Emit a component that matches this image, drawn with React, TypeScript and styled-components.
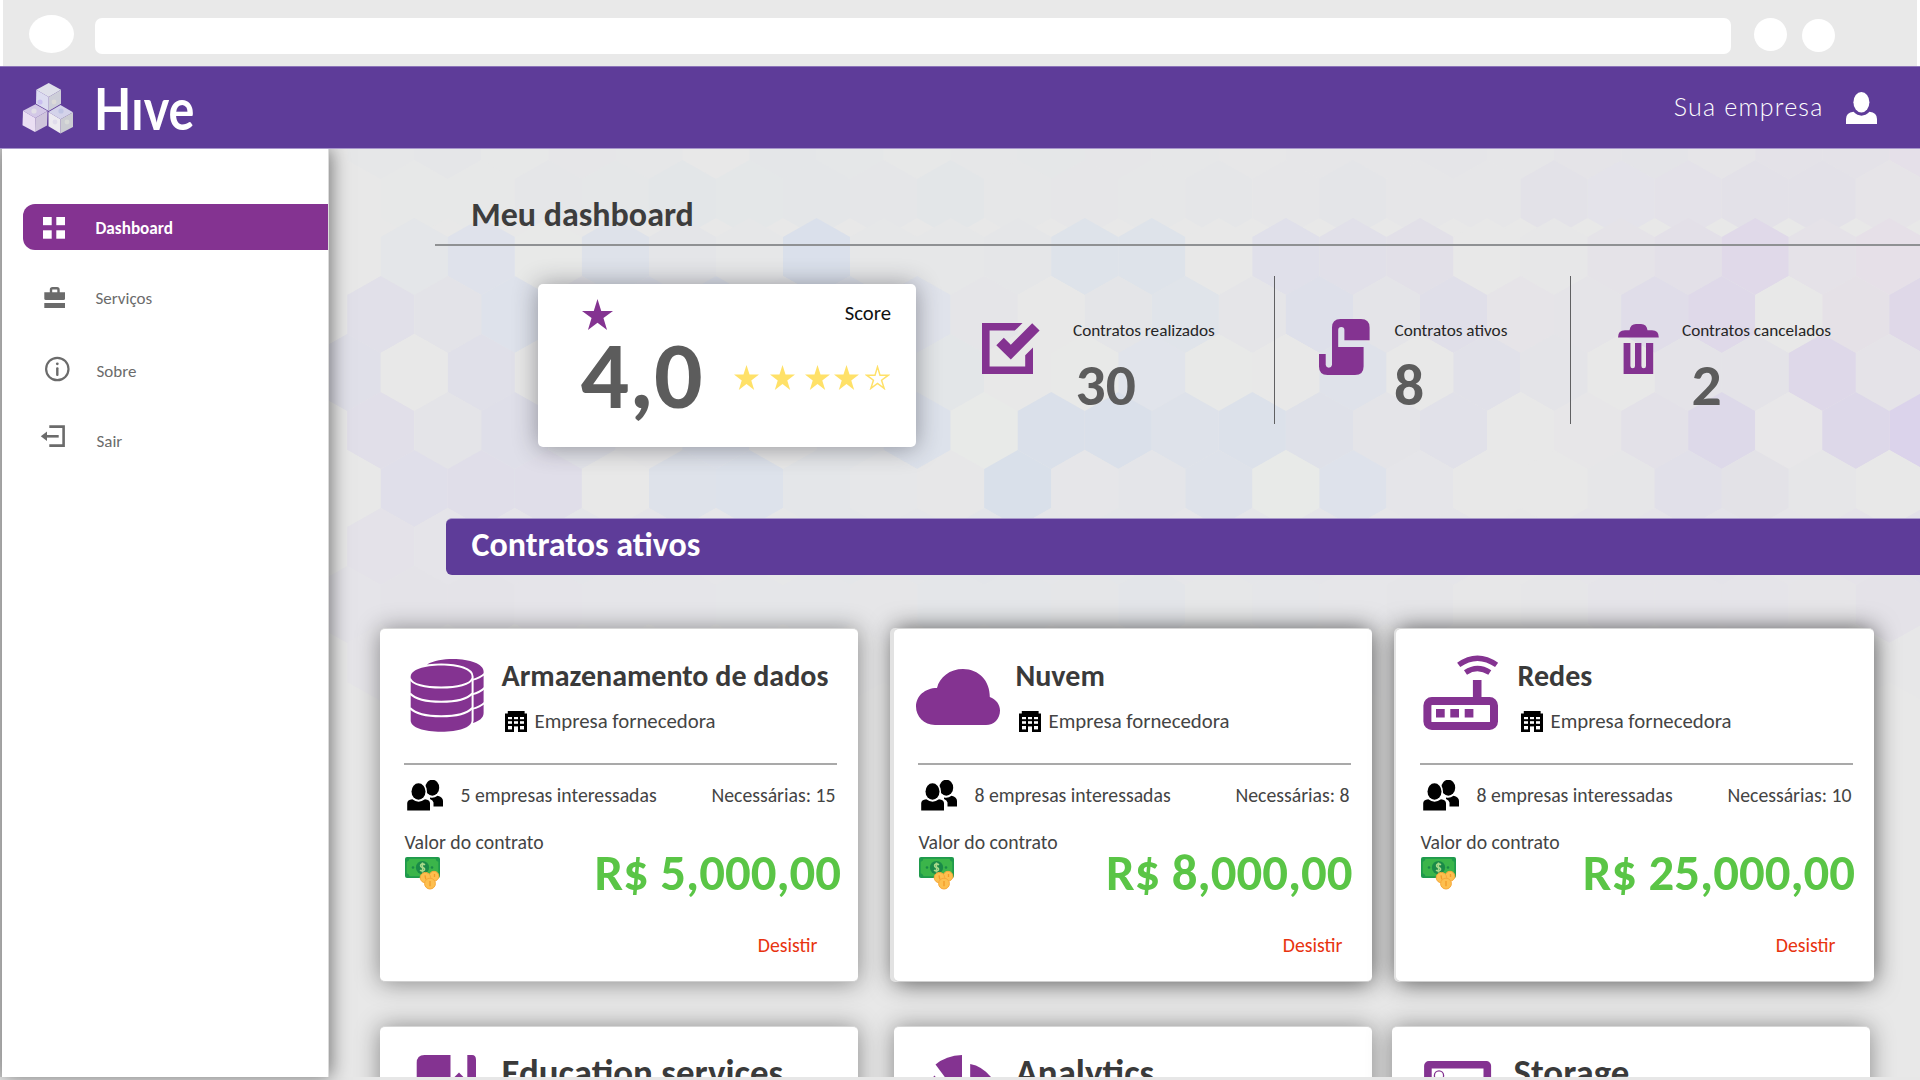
import React from "react";
import styled, { createGlobalStyle } from "styled-components";

const PURPLE = "#5e3c99";
const MAGENTA = "#843391";
const GRAY = "#6b6b6b";

const GlobalStyle = createGlobalStyle`
  * { box-sizing: border-box; }
  html, body { margin: 0; padding: 0; background: #fff; }
  body {
    font-family: Carlito, Calibri, Lato, "Liberation Sans", sans-serif;
    line-height: 1;
    overflow: hidden;
  }
  svg { display: block; flex: none; }
`;

const Page = styled.div`
  width: 1920px;
  height: 1080px;
  display: flex;
  flex-direction: column;
  overflow: hidden;
`;

/* ---------- browser chrome ---------- */

const BrowserBar = styled.div`
  height: 66px;
  margin: 0 3px;
  padding: 15px 0 0 26px;
  display: flex;
  align-items: flex-start;
  background: #e9e9e9;
`;

const BackButton = styled.div`
  width: 45px;
  height: 38px;
  border-radius: 50%;
  background: #fff;
`;

const AddressField = styled.div`
  width: 1636px;
  height: 36px;
  margin: 3px 23px 0 21px;
  border-radius: 7px;
  background: #fff;
`;

const RoundButton = styled.div<{ $drop: number }>`
  width: 33px;
  height: 33px;
  margin: ${(p) => p.$drop}px 15px 0 0;
  border-radius: 50%;
  background: #fff;
`;

/* ---------- header ---------- */

const Header = styled.header`
  position: relative;
  z-index: 3;
  height: 83px;
  padding: 0 42px 0 20px;
  display: flex;
  align-items: flex-start;
  background: ${PURPLE};
  border-top: 1px solid #8c75b8;
  border-bottom: 1px solid #a796cb;
`;

const Brand = styled.div`
  flex: 1;
  display: flex;
  align-items: flex-start;
  padding-top: 12px;
`;

const BrandName = styled.span`
  margin: 0.5px 0 0 18px;
  font-family: Lato, sans-serif;
  font-size: 57px;
  font-weight: 700;
  line-height: 57px;
  color: #fff;
  transform: scaleX(0.85);
  transform-origin: 0 0;
`;

const Dotless = styled.span`
  display: inline-block;
  clip-path: inset(20px 0 0 0);
`;

const Company = styled.span`
  margin: 27px 22.5px 0 0;
  font-family: Lato, sans-serif;
  font-size: 25px;
  font-weight: 300;
  letter-spacing: 1.2px;
  color: #fff;
`;

const UserIcon = styled.svg`
  margin-top: 25px;
`;

/* ---------- body ---------- */

const Body = styled.div`
  height: 928px;
  display: flex;
  border-left: 2px solid #c9c9c9;
`;

const Footer = styled.div`
  height: 3px;
  background: #e7e7e7;
`;

const Sidebar = styled.nav`
  width: 327px;
  flex: none;
  padding: 55px 0 0 21px;
  display: flex;
  flex-direction: column;
  background: #fff;
  box-shadow: 2px 0 18px rgba(0, 0, 0, 0.5);
  border-right: 1px solid #dcdcdc;
  z-index: 2;
`;

const MenuItem = styled.a<{ $active?: boolean; $gap?: number }>`
  height: 46px;
  margin-top: ${(p) => p.$gap ?? 0}px;
  padding-left: 16px;
  display: flex;
  align-items: center;
  border-radius: 12px 0 0 12px;
  background: ${(p) => (p.$active ? MAGENTA : "transparent")};
  color: ${(p) => (p.$active ? "#fff" : GRAY)};
  font-size: ${(p) => (p.$active ? 17.2 : 17)}px;
  font-weight: ${(p) => (p.$active ? 700 : 400)};
`;

const MenuLabel = styled.span<{ $drop: number; $indent?: number }>`
  margin-left: ${(p) => 24.5 + (p.$indent ?? 0)}px;
  padding-top: ${(p) => p.$drop * 2}px;
`;

const Main = styled.main`
  position: relative;
  flex: 1;
  min-width: 0;
  overflow: hidden;
  background: #e8e8e8;
`;

const Backdrop = styled.svg`
  position: absolute;
  left: 0;
  top: 0;
  opacity: 0.88;
`;

const Content = styled.div`
  position: relative;
  display: flex;
  flex-direction: column;
`;

const PageTitle = styled.h1`
  margin: 49px 0 0 106px;
  padding: 0 0 12px 36px;
  font-size: 34px;
  line-height: 34px;
  font-weight: 700;
  color: #3d3d3d;
  border-bottom: 2px solid #8f9193;
`;

const Overview = styled.section`
  height: 272px;
  padding: 30px 0 0 209px;
  display: flex;
  align-items: flex-start;
`;

const ScoreCard = styled.article`
  width: 378px;
  height: 163px;
  margin-top: 8px;
  padding: 14.5px 25px 0 43px;
  background: #fff;
  border-radius: 5px;
  box-shadow: 0 1px 24px rgba(40, 40, 50, 0.45);
`;

const ScoreTop = styled.div`
  height: 29px;
  display: flex;
  justify-content: space-between;
`;

const ScoreLabel = styled.span`
  padding-top: 4.5px;
  font-size: 20.7px;
  color: #111;
`;

const ScoreBottom = styled.div`
  display: flex;
  justify-content: space-between;
  align-items: flex-start;
`;

const ScoreValue = styled.strong`
  font-size: 96px;
  line-height: 96px;
  font-weight: 700;
  margin-left: -0.5px;
  color: #5c5c5c;
`;

const Rating = styled.div`
  display: flex;
  padding-top: 37.5px;
  margin-right: 1px;
`;

const StarIcon = styled.svg<{ $gap?: number }>`
  margin-left: ${(p) => p.$gap ?? 0}px;
`;

const Stat = styled.div<{ $width: number; $pad: number; $last?: boolean }>`
  width: ${(p) => p.$width}px;
  height: 148px;
  padding-left: ${(p) => p.$pad}px;
  display: flex;
  align-items: flex-start;
  border-right: ${(p) => (p.$last ? "none" : "1px solid #606062")};
`;

const StatIcon = styled.div`
  padding-top: 43px;
`;

const StatText = styled.div`
  display: flex;
  flex-direction: column;
  padding: 46px 0 0 1px;
  white-space: nowrap;
`;

const StatLabel = styled.span`
  font-size: 17.2px;
  line-height: 17px;
  color: #262626;
`;

const StatValue = styled.strong<{ $indent: number }>`
  margin: 16px 0 0 ${(p) => p.$indent}px;
  font-size: 59.5px;
  line-height: 60px;
  color: #5c5c5c;
`;

const SectionBar = styled.h2`
  height: 57px;
  margin: 0 0 0 117px;
  padding: 9px 0 0 25.5px;
  font-size: 34px;
  line-height: 34px;
  color: #fff;
  background: ${PURPLE};
  border-top: 1px solid #a99acb;
  border-radius: 6px 0 0 6px;
`;

const CardGrid = styled.div<{ $columns: string; $top: number }>`
  margin: ${(p) => p.$top}px 0 0 51px;
  display: grid;
  grid-template-columns: ${(p) => p.$columns};
  column-gap: 0;
`;

const Card = styled.article<{ $ghost?: number }>`
  width: 478px;
  height: 354px;
  padding: 0 21px 0 24px;
  display: flex;
  flex-direction: column;
  background: #fff;
  border-radius: 5px;
  border-top: 1px solid #d6d6d6;
  border-bottom: 1px solid #cfcfcf;
  box-shadow: ${(p) =>
    p.$ghost
      ? `-${p.$ghost}px 0 0 #e2e2e2, 0 1px 24px rgba(0,0,0,0.65)`
      : "0 1px 24px rgba(0,0,0,0.42)"};
`;

const CardHead = styled.div`
  height: 134px;
  display: flex;
`;

const IconSlot = styled.div<{ $top: number }>`
  width: 97px;
  padding-top: ${(p) => p.$top}px;
`;

const CardHeadText = styled.div<{ $top: number }>`
  padding: ${(p) => p.$top}px 0 0 0.5px;
  white-space: nowrap;
`;

const CardTitle = styled.h3<{ $size?: number }>`
  margin: 0;
  font-size: ${(p) => p.$size ?? 30}px;
  line-height: 30px;
  color: #3a3a3a;
`;

const Supplier = styled.div`
  margin: 20px 0 0 3.5px;
  display: flex;
  align-items: center;
  font-size: 20.8px;
  color: #444;

  span { margin-left: 7.5px; }
`;

const Divider = styled.hr`
  width: 433px;
  height: 2px;
  margin: 0;
  border: 0;
  background: #a9a9a9;
`;

const Interest = styled.div`
  height: 50px;
  display: flex;
  align-items: center;
  justify-content: space-between;
  padding: 12px 1.5px 0 2px;
  font-size: 19.75px;
  color: #444;
`;

const Interested = styled.div`
  display: flex;
  align-items: center;

  span { margin: -1px 0 0 16.5px; }
`;

const NeededCount = styled.span`
  margin-top: -1px;
`;

const Contract = styled.div`
  height: 100px;
  display: flex;
  justify-content: space-between;
  padding-top: 18px;
`;

const ContractLabel = styled.div`
  display: flex;
  flex-direction: column;
  gap: 4px;
  padding-left: 0.5px;
  font-size: 19.75px;
  color: #444;
`;

const Price = styled.strong<{ $shift: number }>`
  margin: 15px ${(p) => p.$shift}px 0 0;
  font-size: 50.8px;
  line-height: 50px;
  color: #5ac546;
`;

const Withdraw = styled.a<{ $end: number }>`
  align-self: flex-end;
  margin: 21px ${(p) => p.$end}px 0 0;
  font-size: 19.75px;
  color: #e8330f;
`;

/* ---------- background pattern ---------- */

const HEX_W = 67.05;
const ROWS: { y: number; x: number; fills: string[] }[] = [
  { y: 102, x: 347.2, fills: ["e6e7e9","e5e6e9","e7e8e8","e6e6e9","e6e7e9","e8e8e8","e4e6e9","e5e7e9","e7e8e8","e6e7e9","e5e7e9","e6e6e9","e6e7e9","e7e7e9","e6e6e9","e6e6e9","e5e5e9","e6e6e9","e5e4e8","e4e4e8","e6e5e9","e4e2e8","e4e2e8","e5e0ea"] },
  { y: 160, x: 380.7, fills: ["e7e8e8","e7e8e9","e5e6e9","e5e7e9","e3e6e9","e4e7e9","e4e6e9","e5e6e9","e3e6e9","e6e7e8","e6e6e9","e6e7e9","e5e6e9","e6e6e9","e4e5e9","e6e6e9","e6e6e9","e3e2e8","e4e3eb","e4e2ea","e3e1e8","e3e1e8","e6e4e8"] },
  { y: 218, x: 313.7, fills: ["e9e9e8","e4e6ea","dee2ec","e8eae9","dde2eb","e4e5e8","e6e7e9","d9e0ec","e6e7e8","e6e7e8","e5e6e9","dde3eb","dde3eb","e8e9e9","dfdfeb","e1e0ea","e2e0e9","e8e8e8","e7e7e9","e5e3e8","e3dfe9","dfd8ea","e5e2e8","e6e0e9"] },
  { y: 276, x: 347.2, fills: ["e1e0ea","e3e3e8","dde2ec","e3e3e8","dee2ec","dde2ec","e5e6e9","dee3ec","dfe3ec","e5e5e9","e9e9e8","e4e5e8","dfe4eb","e5e5e9","dddfeb","e4e4e8","e0deea","e6e4e8","e5e4e8","dfdcea","ded8ea","e9e9e8","e5e1e7","ded6e9"] },
  { y: 334, x: 313.7, fills: ["dfdfea","e9e9e8","dfdfea","e8e9e9","e5e5e9","e5e5e9","e5e5e9","e8eae9","e1e4e9","e3e6e9","e9e9e9","e9eae8","e1e4ec","e8eae9","e9e9e8","dee2eb","e8e8e8","e1e1ea","e4e4e9","e9e9e8","e4e3e9","e4e3e9","ddd6ea","e5e3e8"] },
  { y: 392, x: 347.2, fills: ["e1deea","e4e4e8","dedeea","e2e3ea","e7e7e9","dde2ec","e9e9e8","e4e6ea","dce2ec","e9ebe9","d9e0eb","d9e0eb","dde2eb","dbe1eb","dee1ea","e4e4e9","e1e1ea","e9e9e8","e7e6e9","e3e1e9","dcd8ea","e8e7ea","dcd6ea","dad1ec"] },
  { y: 450, x: 313.7, fills: ["e8e9e9","e0deeb","dfddea","dfddea","e8e9e9","dde2eb","dce2ec","e4e6ea","e6e7ea","e7e7e9","d8e0eb","e6e6ea","e4e5ea","dde2eb","e8ebe9","dde2ec","e5e5ea","e9e9e8","e8e8e8","e6e6e8","e1dfea","e3e2e7","e6e6e8","e9e9e8"] },
  { y: 508, x: 347.2, fills: ["e4e2ea","e5e4ea","e5e4ea","e4e5ea","e5e5ea","e6e6ea","e6e7e9","e4e6ea","e5e6ea","e3e5ea","e5e6ea","e4e6ea","e6e6ea","e5e6ea","e5e5ea","e6e6ea","e5e5ea","e7e7e9","e6e5ea","e5e4ea","e4e3ea","e6e5ea","e5e3ea","e3e1ea"] },
  { y: 566, x: 313.7, fills: ["e5e4ea","e4e3e9","e4e3e9","e5e4ea","e5e5ea","e5e5ea","e5e6ea","e5e6ea","e6e6e9","e4e6ea","e4e6ea","e5e6e9","e3e5ea","e6e7e9","e5e6ea","e6e6ea","e5e5e9","e7e7e9","e6e6e9","e5e4ea","e5e4ea","e5e4ea","e6e5e9","e4e2e9"] },
  { y: 624, x: 347.2, fills: ["e6e5ea","e6e6e9","e7e7e9","e6e6e9","e7e7e9","e7e7e9","e7e7e9","e7e7e9","e7e7e9","e6e7e9","e7e7e9","e6e7e9","e7e7e9","e7e7e9","e7e7e9","e7e7e9","e7e7e9","e7e7e9","e7e7e9","e6e6e9","e6e5e9","e6e5ea","e7e7e9","e7e7e9"] },
];

function HexPattern() {
  return (
    <Backdrop width="1591" height="928" viewBox="329 149 1591 928">
      {ROWS.map((row) =>
        row.fills.map((fill, i) => {
          const x = row.x + i * HEX_W;
          const r = x + HEX_W;
          const c = x + HEX_W / 2;
          return (
            <polygon
              key={`${row.y}-${i}`}
              fill={`#${fill}`}
              points={`${c},${row.y} ${r},${row.y + 19} ${r},${row.y + 58} ${c},${row.y + 77} ${x},${row.y + 58} ${x},${row.y + 19}`}
            />
          );
        })
      )}
    </Backdrop>
  );
}

/* ---------- icons ---------- */

const STAR = "M12 0 L14.9 9.2 H24 L16.6 14.8 L19.4 24 L12 18.3 L4.6 24 L7.4 14.8 L0 9.2 H9.1 Z";

function Star({ size = 25, color = "#ffe168", outline = false, gap = 0 }: { size?: number; color?: string; outline?: boolean; gap?: number }) {
  return (
    <StarIcon $gap={gap} width={size} height={size} viewBox="0 0 24 24">
      {outline ? (
        <path d="M12 1.8 L14.4 9.8 H22.4 L15.9 14.6 L18.4 22.5 L12 17.6 L5.6 22.5 L8.1 14.6 L1.6 9.8 H9.6 Z" fill="none" stroke={color} strokeWidth="1.4" />
      ) : (
        <path d={STAR} fill={color} />
      )}
    </StarIcon>
  );
}

function HiveLogo() {
  return (
    <svg width="56" height="56" viewBox="20 79 56 56">
      <polygon points="48.7,83 61,89.8 48.7,97 36.3,89.8" fill="#dfe0ea" />
      <polygon points="36.3,89.8 48.7,97 48.7,111 36,103.7" fill="#dcdcf0" />
      <polygon points="61,89.8 48.7,97 48.7,111 61,103.7" fill="#cdced8" />
      <polygon points="35.5,104.3 47.5,111 35.3,118 23,110.8" fill="#d3c8e6" />
      <polygon points="23,110.8 35.3,118 35,132 22.5,125.2" fill="#eadff3" />
      <polygon points="47.5,111 35.3,118 35,132 47,125.5" fill="#cfc5dc" />
      <polygon points="60.5,105 73,112.2 60.5,119.2 48.5,112" fill="#d4d3ea" />
      <polygon points="48.5,112 60.5,119.2 60.5,133.4 48.5,126.2" fill="#eceaf0" />
      <polygon points="73,112.2 60.5,119.2 60.5,133.4 73,127" fill="#cbccd2" />
      <circle cx="40" cy="102" r="2.6" fill="#c9bff0" />
      <circle cx="54" cy="102" r="2.4" fill="#dcdad8" />
      <circle cx="34" cy="111" r="2.6" fill="#e2dfe6" />
      <circle cx="61" cy="111" r="2.6" fill="#bfc4e4" />
      <circle cx="67" cy="122" r="2.4" fill="#d8dad8" />
      <circle cx="55" cy="122" r="2.4" fill="#e0dcec" />
    </svg>
  );
}

const GridIcon = () => (
  <svg width="32" height="32" viewBox="39 211 32 32" fill="#fff">
    <rect x="43" y="217" width="8.7" height="8.2" />
    <rect x="56.3" y="217" width="8.7" height="8.2" />
    <rect x="43" y="230.3" width="8.7" height="8.4" />
    <rect x="56.3" y="230.3" width="8.7" height="8.4" />
  </svg>
);

const BriefcaseIcon = () => (
  <svg width="32" height="32" viewBox="39 282 32 32" fill={GRAY}>
    <path d="M51 293 V289.8 Q51 288.3 52.5 288.3 H57 Q58.5 288.3 58.5 289.8 V293" fill="none" stroke={GRAY} strokeWidth="2.4" />
    <path d="M44.3 292.3 H65 V298.5 Q65 300 63.5 300 H45.8 Q44.3 300 44.3 298.5 Z" />
    <rect x="44.3" y="303" width="20.7" height="5" />
  </svg>
);

const InfoIcon = () => (
  <svg width="32" height="32" viewBox="39 353 32 32">
    <circle cx="57.3" cy="369" r="11.2" fill="none" stroke={GRAY} strokeWidth="2.2" />
    <circle cx="57.3" cy="363.8" r="1.4" fill={GRAY} />
    <rect x="56.1" y="367.3" width="2.4" height="8.6" rx="1" fill={GRAY} />
  </svg>
);

const ExitIcon = () => (
  <svg width="32" height="32" viewBox="39 420 32 32">
    <path d="M49.3 426.6 H63.6 V445.6 H49.3" fill="none" stroke={GRAY} strokeWidth="2.6" />
    <path d="M58.7 436.3 H46" fill="none" stroke={GRAY} strokeWidth="2.6" />
    <path d="M40.8 436.3 L47 431.6 V441 Z" fill={GRAY} />
  </svg>
);

const CheckIcon = () => (
  <svg width="90" height="60" viewBox="982 319 90 60" fill={MAGENTA}>
    <path d="M982 323 H1022.5 L1014.8 330.6 H989.6 V366.4 H1025.2 V355.2 L1033 347.4 V374 H982 Z" />
    <path d="M996.3 345.3 L1003.8 337.8 L1010.8 344.8 L1032.2 323.2 L1039.6 330.6 L1010.8 359.6 Z" />
  </svg>
);

const ScrollIcon = () => (
  <svg width="74.5" height="60" viewBox="1319 319 74.5 60" fill={MAGENTA}>
    <path d="M1332 327.5 Q1332 319 1340.5 319 H1361 Q1369.6 319 1369.6 327.5 V340.3 H1344.4 V330 A3.1 3.1 0 0 0 1338.2 330 V347 H1363.6 V366.5 Q1363.6 375 1355 375 H1327.5 Q1319 375 1319 366.5 V354 H1325.7 V365 A3.2 3.2 0 0 0 1332 365 Z" />
  </svg>
);

const TrashIcon = () => (
  <svg width="63" height="60" viewBox="1618 319 63 60" fill={MAGENTA}>
    <path d="M1618 337.5 Q1618 330.3 1625 330.3 H1629.5 Q1630.5 324 1636 324 H1641 Q1646.6 324 1647.5 330.3 H1652 Q1658.8 330.3 1658.8 337.5 Z" />
    <path d="M1623.6 343 H1630.4 V366 A2.3 2.3 0 0 0 1635 366 V343 H1641.4 V366 A2.3 2.3 0 0 0 1646 366 V343 H1653.2 V374 H1623.6 Z" />
  </svg>
);

const DatabaseIcon = () => (
  <svg width="97" height="90" viewBox="404 650 97 90">
    <path d="M427 664.5 C434 660.5 443 659 453 659 C470 659 483.6 664 483.6 671.5 V713 C483.6 718 479 721 473 723 V680 Z" fill={MAGENTA} />
    <path d="M472 680 Q480 678 485 673.5 M472 694.5 Q480 692.5 485 687.5 M472 709 Q480 707 485 702.5" fill="none" stroke="#fff" strokeWidth="1.8" />
    <path d="M410.7 676.5 C410.7 669.5 424 665.4 441.2 665.4 C458.4 665.4 471.6 669.5 471.6 676.5 V720.5 C471.6 727.5 458.4 731.8 441.2 731.8 C424 731.8 410.7 727.5 410.7 720.5 Z" fill={MAGENTA} stroke="#fff" strokeWidth="4" paintOrder="stroke" />
    <path d="M410 678.5 C412 684.5 425 687.6 441.2 687.6 C457 687.6 470.5 684.5 472.3 678.5 M410 693.5 C415 698.8 427 701.8 441.2 701.8 C455.5 701.8 467.5 698.8 472.3 693.5 M410 708 C415 713.3 427 716.3 441.2 716.3 C455.5 716.3 467.5 713.3 472.3 708" fill="none" stroke="#fff" strokeWidth="2" />
  </svg>
);

const CloudIcon = () => (
  <svg width="97" height="90" viewBox="918 650 97 90" overflow="visible">
    <path d="M935 725 C924 725 916 716.5 916 706.5 C916 696 925 688 937 688 C939.5 677 950 669 963 669 C979 669 990 681 989.8 697 C996 699.2 1000 704.5 1000 710.5 C1000 719 994 725 986 725 Z" fill={MAGENTA} />
  </svg>
);

const RouterIcon = () => (
  <svg width="97" height="90" viewBox="1420 650 97 90" fill="none" stroke={MAGENTA}>
    <rect x="1427.4" y="701" width="66.6" height="25" rx="4.5" strokeWidth="8" />
    <path d="M1477.2 680 V698" strokeWidth="8.6" />
    <path d="M1465.5 672.5 Q1477.3 664.5 1489.8 672.5" strokeWidth="5.4" />
    <path d="M1458.7 664.9 Q1477.3 651.5 1496.6 664.9" strokeWidth="5.4" />
    <g fill={MAGENTA} stroke="none">
      <rect x="1436" y="709" width="8.7" height="8.5" />
      <rect x="1450.3" y="709" width="8.7" height="8.5" />
      <rect x="1464.7" y="709" width="8.7" height="8.5" />
    </g>
  </svg>
);

const BookIcon = () => (
  <svg width="97" height="60" viewBox="404 1048 97 60" fill={MAGENTA}>
    <path d="M416.7 1110 V1063 Q416.7 1055 424.5 1055 H450.5 V1110 Z" />
    <path d="M467.3 1055 H472 Q476 1055 476 1060 V1110 H467.3 Z" />
    <path d="M459 1072.5 L467.3 1081 V1110 H450.5 V1081 Z" />
  </svg>
);

const PieIcon = () => (
  <svg width="97" height="60" viewBox="918 1048 97 60" fill={MAGENTA}>
    <path d="M962 1055 V1100 L935.5 1064.6 Q946 1055.5 962 1055 Z" />
    <path d="M970.2 1064 Q984 1066.5 994 1081 L970.2 1100 Z" />
    <path d="M934.5 1075.5 L950 1096 H926 Q927 1084 934.5 1075.5 Z" />
  </svg>
);

const StorageIcon = () => (
  <svg width="97" height="60" viewBox="1416 1048 97 60" fill="none" stroke={MAGENTA}>
    <rect x="1427.9" y="1064.8" width="59.4" height="60" rx="1" strokeWidth="7.6" />
    <circle cx="1439" cy="1075.5" r="4.6" strokeWidth="1.3" />
  </svg>
);

const BuildingIcon = () => (
  <svg width="22" height="21" viewBox="0 0 22 21">
    <path d="M2.8 0 H19.6 V2.6 H22 V21 H0 V2.6 H2.8 Z" fill="#000" />
    <g fill="#fff">
      <rect x="3" y="6" width="4" height="2.2" />
      <rect x="9" y="6" width="4" height="2.2" />
      <rect x="15" y="6" width="4" height="2.2" />
      <rect x="3" y="10.2" width="4" height="2.6" />
      <rect x="9" y="10.2" width="4" height="2.6" />
      <rect x="15" y="10.2" width="4" height="2.6" />
      <rect x="3" y="15" width="4" height="3.4" />
      <rect x="15" y="15" width="4" height="3.4" />
      <rect x="9" y="15.4" width="4" height="5.6" />
    </g>
  </svg>
);

const PeopleIcon = () => (
  <svg width="38" height="32" viewBox="406 779.5 38 32">
    <ellipse cx="432.3" cy="787.2" rx="6.9" ry="8" />
    <path d="M430 797 Q434 798 437.5 795.3 Q443 796.5 443 800.5 V806 H433.5 V802 Q433 799.5 430 798.5 Z" />
    <ellipse cx="418.5" cy="791" rx="7" ry="8.2" stroke="#fff" strokeWidth="3" paintOrder="stroke" />
    <path d="M407.2 810 V802.8 Q407.2 799.4 412.3 798.8 Q418.5 803.5 425 798.8 Q430 799.4 430 802.8 V810 Z" />
  </svg>
);

const MoneyIcon = () => (
  <svg width="36" height="33" viewBox="0 0 36 33">
    <rect x="0" y="0" width="35" height="21" rx="2" fill="#1f9a4c" />
    <path d="M4.5 1.8 H30.5 Q31 4.3 33.3 4.8 V16.2 Q31 16.7 30.5 19.2 H4.5 Q4 16.7 1.7 16.2 V4.8 Q4 4.3 4.5 1.8 Z" fill="#3bb54a" />
    <circle cx="17.5" cy="10.5" r="6.6" fill="#1a8a48" />
    <path d="M20 7.8 Q17.5 6 15.7 7.8 Q15 10 17.5 10.5 Q20.3 11.2 19.4 13 Q17.5 15 15 13.2 M17.5 5.4 V15.6" fill="none" stroke="#a9d98a" strokeWidth="1.5" />
    <circle cx="8" cy="10.5" r="1.3" fill="#1a8a48" />
    <circle cx="27" cy="10.5" r="1.3" fill="#1a8a48" />
    <g stroke="#f7a83a" strokeWidth="1" fill="#fdbf4f">
      <circle cx="29" cy="19.2" r="4.9" />
      <circle cx="20.4" cy="20.6" r="5.2" />
      <circle cx="25" cy="26.6" r="5.4" />
    </g>
    <path d="M25 24 V29.2 M20 18.4 L20.8 22.4 M29.5 17 V20" stroke="#f39a28" strokeWidth="1.3" />
  </svg>
);

/* ---------- data ---------- */

const contracts = [
  { title: "Armazenamento de dados", icon: <DatabaseIcon />, interested: 5, needed: 15, price: "R$ 5,000,00", shift: -4, end: 19.5, ghost: 0 },
  { title: "Nuvem", icon: <CloudIcon />, interested: 8, needed: 8, price: "R$ 8,000,00", shift: -1.5, end: 8.5, ghost: 4 },
  { title: "Redes", icon: <RouterIcon />, interested: 8, needed: 10, price: "R$ 25,000,00", shift: -2, end: 17.5, ghost: 2 },
];

const services = [
  { title: "Education services", icon: <BookIcon /> },
  { title: "Analytics", icon: <PieIcon /> },
  { title: "Storage", icon: <StorageIcon /> },
];

export default function App() {
  return (
    <Page>
      <GlobalStyle />
      <BrowserBar>
        <BackButton />
        <AddressField />
        <RoundButton $drop={3} />
        <RoundButton $drop={4} />
      </BrowserBar>

      <Header>
        <Brand>
          <HiveLogo />
          <BrandName>
            H<Dotless>i</Dotless>ve
          </BrandName>
        </Brand>
        <Company>Sua empresa</Company>
        <UserIcon width="32" height="32" viewBox="1846 92 32 32" fill="#fff">
          <ellipse cx="1861.4" cy="102.3" rx="8" ry="10.2" />
          <path d="M1846 124 V119 Q1846 112.8 1853.5 111.8 Q1861.5 119.5 1869.5 111.8 Q1877 112.8 1877 119 V124 Z" />
        </UserIcon>
      </Header>

      <Body>
        <Sidebar>
          <MenuItem $active>
            <GridIcon />
            <MenuLabel $drop={1.7}>Dashboard</MenuLabel>
          </MenuItem>
          <MenuItem $gap={24.5}>
            <BriefcaseIcon />
            <MenuLabel $drop={0.7}>Serviços</MenuLabel>
          </MenuItem>
          <MenuItem $gap={25.5}>
            <InfoIcon />
            <MenuLabel $drop={2.5} $indent={1}>Sobre</MenuLabel>
          </MenuItem>
          <MenuItem $gap={21}>
            <ExitIcon />
            <MenuLabel $drop={5} $indent={1}>Sair</MenuLabel>
          </MenuItem>
        </Sidebar>

        <Main>
          <HexPattern />
          <Content>
            <PageTitle>Meu dashboard</PageTitle>
            <Overview>
              <ScoreCard>
                <ScoreTop>
                  <Star size={31} color={MAGENTA} gap={1} />
                  <ScoreLabel>Score</ScoreLabel>
                </ScoreTop>
                <ScoreBottom>
                  <ScoreValue>4,0</ScoreValue>
                  <Rating>
                    <Star />
                    <Star gap={10.5} />
                    <Star gap={10} />
                    <Star gap={4} />
                    <Star gap={6.5} outline />
                  </Rating>
                </ScoreBottom>
              </ScoreCard>
              <Stat $width={359} $pad={66}>
                <StatIcon><CheckIcon /></StatIcon>
                <StatText>
                  <StatLabel>Contratos realizados</StatLabel>
                  <StatValue $indent={2.5}>30</StatValue>
                </StatText>
              </Stat>
              <Stat $width={296} $pad={44}>
                <StatIcon><ScrollIcon /></StatIcon>
                <StatText>
                  <StatLabel>Contratos ativos</StatLabel>
                  <StatValue $indent={-0.5}>8</StatValue>
                </StatText>
              </Stat>
              <Stat $width={340} $pad={47} $last>
                <StatIcon><TrashIcon /></StatIcon>
                <StatText>
                  <StatLabel>Contratos cancelados</StatLabel>
                  <StatValue $indent={9.5}>2</StatValue>
                </StatText>
              </Stat>
            </Overview>

            <SectionBar>Contratos ativos</SectionBar>

            <CardGrid $columns="514px 502px 478px" $top={53}>
              {contracts.map((c) => (
                <Card key={c.title} $ghost={c.ghost}>
                  <CardHead>
                    <IconSlot $top={21}>{c.icon}</IconSlot>
                    <CardHeadText $top={31.5}>
                      <CardTitle>{c.title}</CardTitle>
                      <Supplier>
                        <BuildingIcon />
                        <span>Empresa fornecedora</span>
                      </Supplier>
                    </CardHeadText>
                  </CardHead>
                  <Divider />
                  <Interest>
                    <Interested>
                      <PeopleIcon />
                      <span>{c.interested} empresas interessadas</span>
                    </Interested>
                    <NeededCount>Necessárias: {c.needed}</NeededCount>
                  </Interest>
                  <Contract>
                    <ContractLabel>
                      <span>Valor do contrato</span>
                      <MoneyIcon />
                    </ContractLabel>
                    <Price $shift={c.shift}>{c.price}</Price>
                  </Contract>
                  <Withdraw $end={c.end}>Desistir</Withdraw>
                </Card>
              ))}
            </CardGrid>

            <CardGrid $columns="514px 498px 478px" $top={44}>
              {services.map((s) => (
                <Card key={s.title}>
                  <CardHead>
                    <IconSlot $top={21}>{s.icon}</IconSlot>
                    <CardHeadText $top={30.5}>
                      <CardTitle $size={36.9}>{s.title}</CardTitle>
                    </CardHeadText>
                  </CardHead>
                </Card>
              ))}
            </CardGrid>
          </Content>
        </Main>
      </Body>
      <Footer />
    </Page>
  );
}
